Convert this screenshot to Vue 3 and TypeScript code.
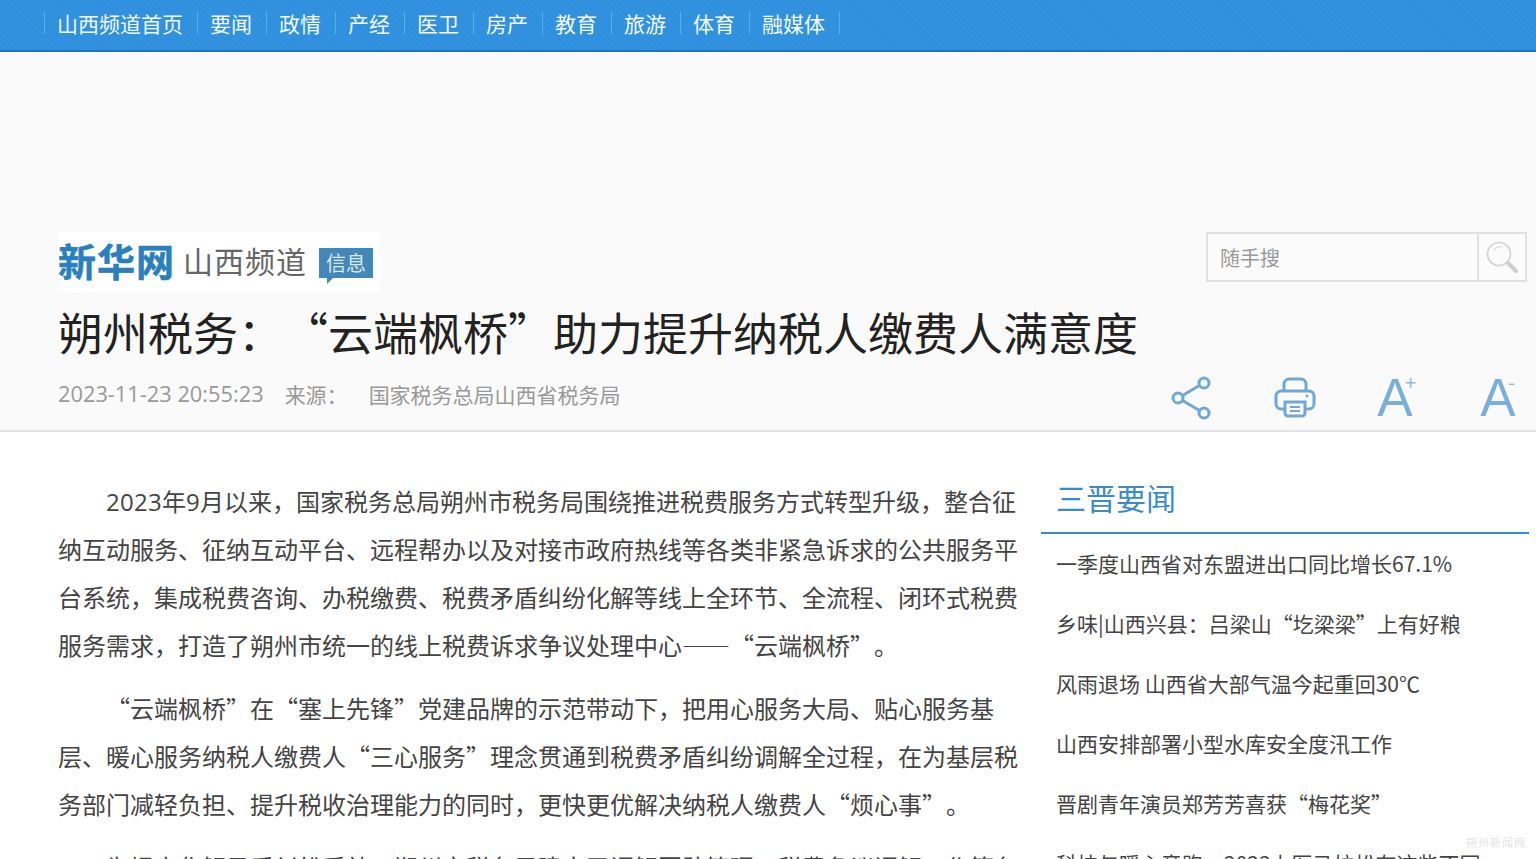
<script setup lang="ts">
const navItems: string[] = ['山西频道首页', '要闻', '政情', '产经', '医卫', '房产', '教育', '旅游', '体育', '融媒体']

const paragraphs: string[] = [
  '“云端枫桥”在“塞上先锋”党建品牌的示范带动下，把用心服务大局、贴心服务基层、暖心服务纳税人缴费人“三心服务”理念贯通到税费矛盾纠纷调解全过程，在为基层税务部门减轻负担、提升税收治理能力的同时，更快更优解决纳税人缴费人“烦心事”。',
  '为提高化解矛盾纠纷质效，朔州市税务局建立了调解团队管理，税费争议调解工作等各',
]

const news: string[] = [
  '一季度山西省对东盟进出口同比增长67.1%',
  '乡味|山西兴县：吕梁山“圪梁梁”上有好粮',
  '风雨退场 山西省大部气温今起重回30℃',
  '山西安排部署小型水库安全度汛工作',
  '晋剧青年演员郑芳芳喜获“梅花奖”',
  '科技与暖心竞跑，2023上医马拉松有这些不同',
]
</script>

<template>
  <div class="page" lang="zh-CN">
    <nav class="nav">
      <a v-for="item in navItems" :key="item" class="nav-item">{{ item }}</a>
    </nav>

    <header class="head">
      <div class="brand-row">
        <div class="logo">
          <span class="logo-main">新华网</span>
          <span class="logo-sub">山西频道</span>
          <span class="logo-tag">信息</span>
        </div>
        <div class="search">
          <span class="search-text">随手搜</span>
          <span class="search-btn">
            <svg width="34" height="34" viewBox="0 0 34 34" fill="none">
              <circle cx="14" cy="14" r="11.5" stroke="#d2d2d2" stroke-width="1.6" />
              <path d="M9 10a7 7 0 0 1 8-3" stroke="#dcdcdc" stroke-width="1.4" />
              <path d="M23 23l8 8" stroke="#cfcfcf" stroke-width="4" stroke-linecap="round" />
            </svg>
          </span>
        </div>
      </div>

      <h1 class="title">朔州税务：“云端枫桥”助力提升纳税人缴费人满意度</h1>

      <div class="meta-row">
        <div class="meta">
          <span class="date">2023-11-23 20:55:23</span>
          <span class="src-label">来源：</span>
          <span>国家税务总局山西省税务局</span>
        </div>
        <div class="tools">
          <svg class="tool" width="42" height="44" viewBox="0 0 42 44" fill="none" stroke="#6fa8d6" stroke-width="3">
            <circle cx="7" cy="22" r="5" />
            <circle cx="33" cy="7" r="5" />
            <circle cx="33" cy="37" r="5" />
            <path d="M11.5 19.5L28.5 9.5M11.5 24.5L28.5 34.5" />
          </svg>
          <svg class="tool" width="42" height="44" viewBox="0 0 42 44" fill="none" stroke="#6fa8d6" stroke-width="3">
            <path d="M10 15V8a5 5 0 0 1 5-5h12a5 5 0 0 1 5 5v7" />
            <path d="M10 33H7a5 5 0 0 1-5-5V20a5 5 0 0 1 5-5h28a5 5 0 0 1 5 5v8a5 5 0 0 1-5 5h-3" />
            <path d="M11 26h20v11a3 3 0 0 1-3 3H14a3 3 0 0 1-3-3z" />
            <path d="M16 31h10M16 35h10" stroke-width="2" />
            <circle cx="33" cy="20" r="1.4" fill="#6fa8d6" stroke="none" />
          </svg>
          <div class="font-tool">
            <span class="big-a">A</span>
            <span class="sup-a">+</span>
          </div>
          <div class="font-tool">
            <span class="big-a">A</span>
            <span class="sup-a">-</span>
          </div>
        </div>
      </div>
    </header>

    <main class="main">
      <article class="article">
        <p><span class="num">2023</span>年<span class="num">9</span>月以来，国家税务总局朔州市税务局围绕推进税费服务方式转型升级，整合征纳互动服务、征纳互动平台、远程帮办以及对接市政府热线等各类非紧急诉求的公共服务平台系统，集成税费咨询、办税缴费、税费矛盾纠纷化解等线上全环节、全流程、闭环式税费服务需求，打造了朔州市统一的线上税费诉求争议处理中心——“云端枫桥”。</p>
        <p v-for="(p, i) in paragraphs" :key="i">{{ p }}</p>
      </article>
      <aside class="side">
        <h2 class="side-title">三晋要闻</h2>
        <ul class="side-list">
          <li v-for="n in news" :key="n">{{ n }}</li>
        </ul>
      </aside>
    </main>

    <div class="watermark">朔州新闻网</div>
  </div>
</template>

<style>
html,
body {
  margin: 0;
  overflow: hidden;
  background: #fff;
}
</style>

<style scoped>
.page {
  position: relative;
  height: 859px;
  overflow: hidden;
  font-family: "Noto Sans CJK SC", "Noto Sans", sans-serif;
  color: #333;
  text-spacing-trim: space-all;
}

.nav {
  display: flex;
  align-items: center;
  box-sizing: border-box;
  height: 52px;
  padding: 0 0 4px 44px;
  background: repeating-linear-gradient(45deg, #3392df 0 2px, #2f90dd 2px 4px);
  border-bottom: 2px solid #1f74b8;
}

.nav-item {
  padding: 0 14px 0 12px;
  border-left: 1px solid #5aaeee;
  height: 22px;
  line-height: 22px;
  font-size: 21px;
  color: #f4faff;
}

.nav-item:last-child {
  border-right: 1px solid #5aaeee;
}

.head {
  box-sizing: border-box;
  height: 380px;
  padding: 180px 9px 0 58px;
  background: #fafafa;
  border-bottom: 2px solid #e2e2e2;
}

.brand-row {
  display: flex;
  justify-content: space-between;
  align-items: flex-start;
}

.logo {
  display: flex;
  align-items: center;
  box-sizing: border-box;
  width: 322px;
  height: 60px;
  background: #fff;
}

.logo-main {
  margin-top: -4px;
  font-size: 38px;
  font-weight: 700;
  line-height: 56px;
  letter-spacing: 1px;
  color: #2a7fbd;
  -webkit-text-stroke: 0.6px #2a7fbd;
}

.logo-sub {
  margin: -4px 0 0 8px;
  font-size: 30px;
  letter-spacing: 1px;
  color: #666;
}

.logo-tag {
  position: relative;
  margin: 2px 0 0 12px;
  width: 54px;
  height: 30px;
  line-height: 30px;
  text-align: center;
  font-size: 20px;
  color: #d8e8f3;
  background: #4487b9;
}

.logo-tag::after {
  content: "";
  position: absolute;
  left: 8px;
  bottom: -6px;
  border-left: 7px solid #4487b9;
  border-bottom: 7px solid transparent;
}

.search {
  display: flex;
  box-sizing: border-box;
  width: 321px;
  height: 50px;
  border: 2px solid #e0e0e0;
  background: #fbfbfb;
}

.search-text {
  flex: 1;
  padding-left: 12px;
  line-height: 48px;
  font-size: 20px;
  color: #999;
}

.search-btn {
  display: flex;
  align-items: center;
  justify-content: center;
  width: 46px;
  border-left: 2px solid #e0e0e0;
}

.title {
  margin: 9px 0 0;
  height: 62px;
  line-height: 62px;
  font-size: 45px;
  font-weight: 400;
  color: #222;
  white-space: nowrap;
}

.meta-row {
  display: flex;
  justify-content: space-between;
  align-items: flex-start;
  margin-top: 9px;
}

.meta {
  display: flex;
  margin-top: 7px;
  font-size: 21px;
  line-height: 30px;
  color: #999;
  white-space: nowrap;
}

.date {
  margin-right: 21px;
  font-family: "Open Sans", sans-serif;
  font-size: 21.8px;
}

.src-label {
  margin-right: 21px;
}

.tools {
  display: flex;
  align-items: center;
  gap: 61px;
  margin: 4px 5px 0 0;
}

.font-tool {
  position: relative;
  width: 42px;
  height: 44px;
  text-align: center;
}

.big-a {
  margin-left: -6px;
  font-family: "Liberation Sans", sans-serif;
  font-size: 53px;
  line-height: 44px;
  color: #7aafd9;
}

.sup-a {
  position: absolute;
  left: 28px;
  top: -4px;
  font-size: 20px;
  line-height: 20px;
  color: #8fb9da;
}

.main {
  display: flex;
  padding: 45px 7px 0 58px;
}

.article {
  width: 960px;
  flex-shrink: 0;
}

.article p {
  margin: 0 0 15px;
  font-size: 24px;
  line-height: 48px;
  text-indent: 2em;
  color: #444;
}

.num {
  font-family: "Open Sans", sans-serif;
  line-height: 0;
  letter-spacing: 0.27px;
}

.side {
  margin-left: 23px;
  flex: 1;
}

.side-title {
  margin: 0;
  padding: 0 15px;
  height: 55px;
  line-height: 40px;
  font-size: 30px;
  font-weight: 400;
  color: #3a8bcb;
  border-bottom: 2px solid #3a8bcb;
}

.side-list {
  margin: 0;
  padding: 0 15px;
  list-style: none;
}

.side-list li {
  height: 60px;
  line-height: 58px;
  font-size: 21px;
  color: #444;
  white-space: nowrap;
}

.watermark {
  position: absolute;
  right: 10px;
  bottom: 10px;
  font-size: 11px;
  line-height: 14px;
  letter-spacing: 1px;
  color: #e4e4e4;
}
</style>
